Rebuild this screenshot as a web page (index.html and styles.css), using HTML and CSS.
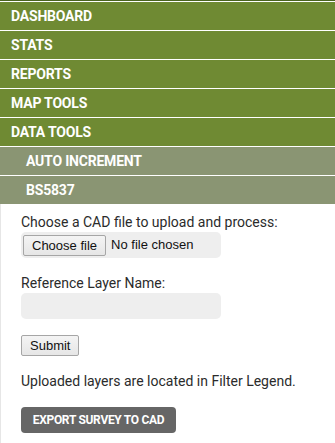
FILE: index.html
```html
<!DOCTYPE html>
<html lang="en">
<head>
  <meta charset="UTF-8" />
  <meta name="viewport" content="width=device-width, initial-scale=1.0"/>
  <title>Data Tools</title>
  <link rel="stylesheet" href="styles.css">
</head>
<body>
  <div class="sidebar">
    <ul class="menu">
      <li class="menu-item">DASHBOARD</li>
      <li class="menu-item">STATS</li>
      <li class="menu-item">REPORTS</li>
      <li class="menu-item">MAP TOOLS</li>
      <li class="menu-item">DATA TOOLS</li>
      <li class="menu-item sub">AUTO INCREMENT</li>
      <li class="menu-item sub">BS5837</li>
    </ul>

    <div class="panel">
      <label for="cadFile">Choose a CAD file to upload and process:</label>
      <div class="file-box">
        <button class="plain-btn" type="button">Choose file</button>
        <span class="file-name">No file chosen</span>
        <input type="file" id="cadFile" class="hidden" />
      </div>

      <label for="layerName">Reference Layer Name:</label>
      <input type="text" id="layerName" class="text-input" />

      <button class="plain-btn submit-btn">Submit</button>

      <p class="note">Uploaded layers are located in Filter Legend.</p>

      <button class="export-btn">EXPORT SURVEY TO CAD</button>
    </div>
  </div>
</body>
</html>
```

FILE: styles.css
```css
:root {
  --green: #6f8a33;
  --green-dark: #4b6420;
  --sub: #8a9573;
  --fg: #2b2b2b;
  --field: #eeeeee;
}

body {
  margin: 0;
  font-family: Roboto, 'Liberation Sans', sans-serif;
  color: var(--fg);
  background: #fff;
}

.sidebar {
  border-top: 1px solid var(--green-dark);
}

.menu {
  list-style: none;
  margin: 0;
  padding: 0;
  border-top: 1px solid #fff;
}

.menu-item {
  background: var(--green);
  color: #fff;
  font-weight: 700;
  font-size: 14px;
  letter-spacing: -0.2px;
  height: 28px;
  line-height: 28px;
  padding-left: 11px;
  border-bottom: 1px solid #fff;
}

.menu-item.sub {
  background: var(--sub);
  padding-left: 26px;
}

.menu-item:last-child {
  border-bottom: none;
}

.panel {
  border-left: 1px solid #e6e6e6;
  padding: 10px 20px 10px;
  font-size: 14px;
  line-height: 16px;
}

.panel label {
  display: block;
  margin-bottom: 2px;
}

.hidden {
  display: none;
}

.file-box {
  display: flex;
  align-items: center;
  gap: 5px;
  width: 200px;
  height: 26px;
  padding-left: 2px;
  box-sizing: border-box;
  background: var(--field);
  border-radius: 5px;
  margin-bottom: 17px;
  font-family: 'Liberation Sans', Arial, sans-serif;
  font-size: 13px;
  color: #111;
}

.plain-btn {
  font-family: 'Liberation Sans', Arial, sans-serif;
  font-size: 13px;
  color: #111;
  height: 21px;
  padding: 0 8px;
  border: 1px solid #a6a6a6;
  border-radius: 2px;
  background: linear-gradient(#f4f4f4, #e6e6e6);
}

.text-input {
  display: block;
  width: 200px;
  height: 26px;
  box-sizing: border-box;
  border: none;
  background: var(--field);
  border-radius: 5px;
  margin-bottom: 16px;
}

.submit-btn {
  display: block;
}

.note {
  margin: 17px 0 18px;
}

.export-btn {
  display: block;
  background: #666;
  color: #fff;
  border: none;
  border-radius: 4px;
  font-family: Roboto, 'Liberation Sans', sans-serif;
  font-weight: 700;
  font-size: 12px;
  letter-spacing: -0.3px;
  padding: 0 10px;
  width: 155px;
  height: 26px;
}
```
